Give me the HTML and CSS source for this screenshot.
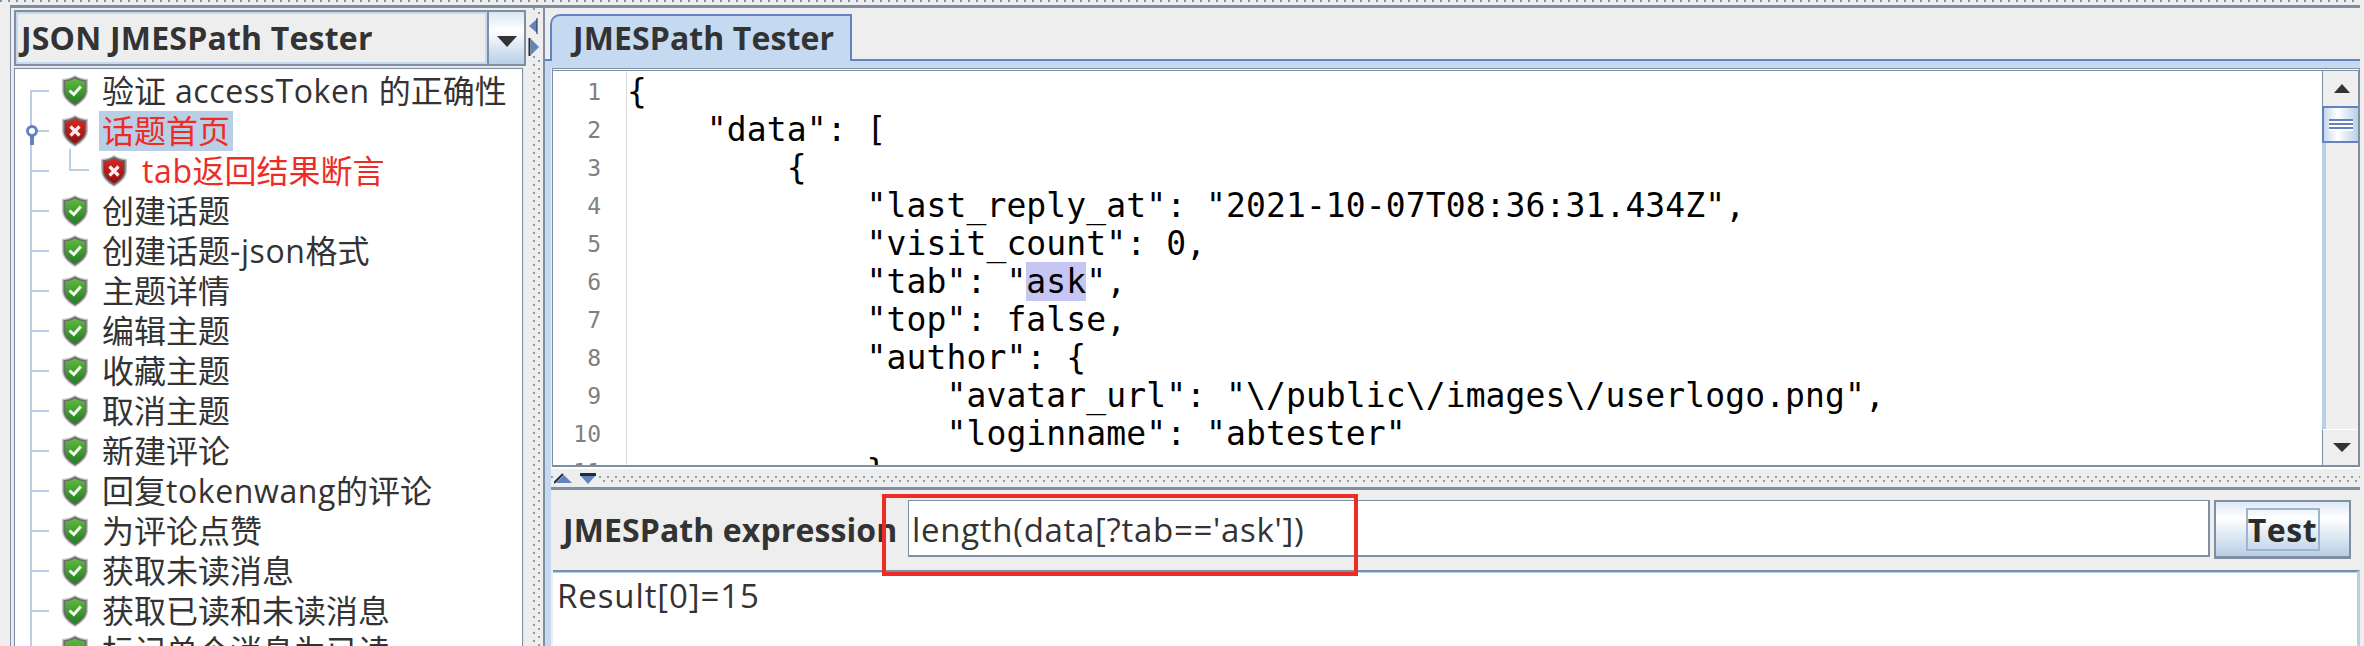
FILE: index.html
```html
<!DOCTYPE html>
<html lang="zh">
<head>
<meta charset="utf-8">
<title>JSON JMESPath Tester</title>
<link rel="stylesheet" href="styles.css">
</head>
<body>
<svg class="defs" width="0" height="0" aria-hidden="true">
  <defs>
    <linearGradient id="g-ok" x1="0" y1="0" x2="0" y2="1"><stop offset="0" stop-color="#63b843"/><stop offset="1" stop-color="#1f7f1c"/></linearGradient>
    <linearGradient id="g-err" x1="0" y1="0" x2="0" y2="1"><stop offset="0" stop-color="#d32a25"/><stop offset="1" stop-color="#8f0f0c"/></linearGradient>
    <symbol id="shield-ok" viewBox="0 0 26 32">
      <path d="M13 0C9.500 2.600 5 3.600 0 4L0 16C0 23 7 28.500 13 32C19 28.500 26 23 26 16L26 4C21 3.600 16.500 2.600 13 0Z" fill="#c4c4c4"/>
      <path d="M13 1.500C10 3.500 6 4.700 1.500 5.200L1.500 16C1.500 22.500 8 27.500 13 30.500C18 27.500 24.500 22.500 24.500 16L24.500 5.200C20 4.700 16 3.500 13 1.500Z" fill="#6a6a6a"/>
      <path d="M13 3.500C10.500 5 7 6.100 3 6.600L3 16C3 21.500 9 26 13 28.500C17 26 23 21.500 23 16L23 6.600C19 6.100 15.500 5 13 3.500Z" fill="url(#g-ok)"/>
      <path d="M7.500 15.500L11.800 19.500L18.800 11.500" fill="none" stroke="#f6fff4" stroke-width="2.800"/>
    </symbol>
    <symbol id="shield-err" viewBox="0 0 26 32">
      <path d="M13 0C9.500 2.600 5 3.600 0 4L0 16C0 23 7 28.500 13 32C19 28.500 26 23 26 16L26 4C21 3.600 16.500 2.600 13 0Z" fill="#c4c4c4"/>
      <path d="M13 1.500C10 3.500 6 4.700 1.500 5.200L1.500 16C1.500 22.500 8 27.500 13 30.500C18 27.500 24.500 22.500 24.500 16L24.500 5.200C20 4.700 16 3.500 13 1.500Z" fill="#6a6a6a"/>
      <path d="M13 3.500C10.500 5 7 6.100 3 6.600L3 16C3 21.500 9 26 13 28.500C17 26 23 21.500 23 16L23 6.600C19 6.100 15.500 5 13 3.500Z" fill="url(#g-err)"/>
      <path d="M8.500 11.500L17.500 20.500M17.500 11.500L8.500 20.500" fill="none" stroke="#ffecec" stroke-width="3.200"/>
    </symbol>
  </defs>
</svg>
<div class="window">
  <div class="top-dots"></div>
  <div class="frame">
    <aside class="left">
      <div class="combo">
        <div class="combo-value">JSON JMESPath Tester</div>
        <div class="combo-button"><span class="tri-down"></span></div>
      </div>
      <ul class="tree">
        <li class="row"><span class="conn first"></span><svg class="shield"><use href="#shield-ok"/></svg><span class="label">验证<span class="latin"> accessToken </span>的正确性</span></li>
        <li class="row"><span class="conn"><svg class="handle" width="14" height="22" viewBox="0 0 14 22"><circle cx="7" cy="7" r="4.500" fill="#fff" stroke="#6382bf" stroke-width="3"/><rect x="5" y="11" width="4" height="10" fill="#6382bf"/></svg></span><svg class="shield"><use href="#shield-err"/></svg><span class="label selected failed">话题首页</span></li>
        <li class="row"><span class="conn"></span><span class="conn-child"></span><svg class="shield"><use href="#shield-err"/></svg><span class="label failed child"><span class="latin">tab</span>返回结果断言</span></li>
        <li class="row"><span class="conn"></span><svg class="shield"><use href="#shield-ok"/></svg><span class="label">创建话题</span></li>
        <li class="row"><span class="conn"></span><svg class="shield"><use href="#shield-ok"/></svg><span class="label">创建话题<span class="latin">-json</span>格式</span></li>
        <li class="row"><span class="conn"></span><svg class="shield"><use href="#shield-ok"/></svg><span class="label">主题详情</span></li>
        <li class="row"><span class="conn"></span><svg class="shield"><use href="#shield-ok"/></svg><span class="label">编辑主题</span></li>
        <li class="row"><span class="conn"></span><svg class="shield"><use href="#shield-ok"/></svg><span class="label">收藏主题</span></li>
        <li class="row"><span class="conn"></span><svg class="shield"><use href="#shield-ok"/></svg><span class="label">取消主题</span></li>
        <li class="row"><span class="conn"></span><svg class="shield"><use href="#shield-ok"/></svg><span class="label">新建评论</span></li>
        <li class="row"><span class="conn"></span><svg class="shield"><use href="#shield-ok"/></svg><span class="label">回复<span class="latin">tokenwang</span>的评论</span></li>
        <li class="row"><span class="conn"></span><svg class="shield"><use href="#shield-ok"/></svg><span class="label">为评论点赞</span></li>
        <li class="row"><span class="conn"></span><svg class="shield"><use href="#shield-ok"/></svg><span class="label">获取未读消息</span></li>
        <li class="row"><span class="conn"></span><svg class="shield"><use href="#shield-ok"/></svg><span class="label">获取已读和未读消息</span></li>
        <li class="row"><span class="conn"></span><svg class="shield"><use href="#shield-ok"/></svg><span class="label">标记单个消息为已读</span></li>
      </ul>
    </aside>
    <div class="vsplit">
      <svg class="vsplit-arrows" width="12" height="42" viewBox="0 0 12 42">
        <path d="M9 5L1 12L9 19Z" fill="#6382bf"/><path d="M9 4L9 20" stroke="#1f2a3a" stroke-width="1"/>
        <path d="M3 25L11 33L3 41Z" fill="#6382bf"/><path d="M1.500 24L1.500 42" stroke="#1f2a3a" stroke-width="2"/>
      </svg>
    </div>
    <main class="right">
      <div class="tabs"><div class="tab">JMESPath Tester</div></div>
      <div class="tab-body">
        <section class="editor">
          <div class="gutter"><div>1</div><div>2</div><div>3</div><div>4</div><div>5</div><div>6</div><div>7</div><div>8</div><div>9</div><div>10</div><div>11</div></div>
<pre class="code">{
    "data": [
        {
            "last_reply_at": "2021-10-07T08:36:31.434Z",
            "visit_count": 0,
            "tab": "<span class="mark">ask</span>",
            "top": false,
            "author": {
                "avatar_url": "\/public\/images\/userlogo.png",
                "loginname": "abtester"
            }</pre>
          <div class="scrollbar">
            <div class="sb-button"><span class="tri-up"></span></div>
            <div class="sb-thumb"><span class="grip"></span></div>
            <div class="sb-track"></div>
            <div class="sb-button down"><span class="tri-down small"></span></div>
          </div>
        </section>
        <div class="hsplit">
          <svg width="44" height="12" viewBox="0 0 44 12"><path d="M2 10L10 2L18 10Z" fill="#6382bf"/><path d="M0 10L9 1" stroke="#1f2a3a" stroke-width="2"/><path d="M26 2L42 2L34 11Z" fill="#6382bf"/><path d="M26 1.500L42 1.500" stroke="#1f2a3a" stroke-width="3"/></svg>
        </div>
        <section class="expr">
          <span class="expr-label">JMESPath expression</span>
          <div class="expr-input">length(data[?tab=='ask'])</div>
          <button class="test" type="button"><span class="test-focus">Test</span></button>
          <div class="annotation"></div>
        </section>
        <section class="result">Result[0]=15</section>
      </div>
    </main>
  </div>
</div>
</body>
</html>
```
FILE: styles.css
```css
* { box-sizing: border-box; }
html, body { margin: 0; padding: 0; height: 646px; overflow: hidden; background: #eeeeee; }
body { font-family: "Open Sans", "Noto Sans CJK SC", sans-serif; font-size: 32px; color: #333; }
.defs { position: absolute; }

.window { height: 646px; display: flex; flex-direction: column; padding-right: 4px; background: #eee; }
.top-dots {
  height: 5px; flex: none;
  background-image: linear-gradient(90deg, #8494a8 2px, transparent 2px);
  background-size: 8px 2px; background-repeat: repeat-x;
}
.frame {
  flex: 1; min-height: 0; margin-left: 10px; display: flex;
  border-top: 3px solid #7f8fa3;
  border-left: 1px solid #7f8fa3;
}

/* left pane */
.left { width: 515px; flex: none; display: flex; flex-direction: column; padding: 2px 0 0 3px; }
.combo { height: 56px; flex: none; display: flex; border: 2px solid #7f8fa3; background: #eee; }
.combo-value {
  flex: 1; border: 2px solid #c5daf0; padding-left: 3px;
  font-weight: 700; line-height: 48px; letter-spacing: .2px; white-space: nowrap; color: #333;
}
.combo-button {
  width: 37px; display: flex; align-items: center; justify-content: center;
  border-left: 2px solid #7f8fa3;
  background: linear-gradient(#d9e5f2, #ffffff 35%, #b8cfe6);
  padding-top: 6px;
}
.tri-down { width: 0; height: 0; border-left: 10px solid transparent; border-right: 10px solid transparent; border-top: 11px solid #333; }
.tri-down.small { border-left-width: 9px; border-right-width: 9px; border-top-width: 9px; }
.tri-up { width: 0; height: 0; border-left: 8px solid transparent; border-right: 8px solid transparent; border-bottom: 9px solid #333; }

.tree {
  list-style: none; margin: 2px 0 0; padding: 2px 0 0; flex: 1; min-height: 0; overflow: hidden;
  width: 509px; background: #fff;
  border: 1px solid #7f8fa3; border-bottom: 0;
  outline: 1px solid #dfe4ea;
}
.row { height: 40px; display: flex; align-items: center; white-space: nowrap; padding-left: 15px; color: #333; }
.conn {
  position: relative; width: 19px; height: 40px; flex: none;
  background:
    linear-gradient(#b8cfe6, #b8cfe6) 0 0 / 2px 100% no-repeat,
    linear-gradient(#b8cfe6, #b8cfe6) 0 19px / 100% 2px no-repeat;
}
.conn.first {
  background:
    linear-gradient(#b8cfe6, #b8cfe6) 0 19px / 2px 21px no-repeat,
    linear-gradient(#b8cfe6, #b8cfe6) 0 19px / 100% 2px no-repeat;
}
.conn-child {
  width: 20px; height: 22px; flex: none; align-self: flex-start; margin: -2px 0 0 20px;
  border-left: 2px solid #b8cfe6; border-bottom: 2px solid #b8cfe6;
}
.conn-child + .shield { margin-left: 12px; }
.handle { position: absolute; left: -5px; top: 13px; }
.shield { width: 26px; height: 32px; flex: none; margin-left: 13px; filter: blur(0.6px); }
.label { margin-left: 11px; padding: 0 3px; line-height: 40px; height: 40px; }
.label.child { margin-left: 12px; }
.label.failed { color: #ee2c25; }
.label.selected { background: #b8cfe6; }
.latin { letter-spacing: .6px; }

/* vertical splitter */
.vsplit {
  width: 17px; flex: none; padding: 6px 0 0 2px;
  background-image: linear-gradient(#8c9bb0 2px, transparent 2px), linear-gradient(#8c9bb0 2px, transparent 2px);
  background-size: 2px 8px, 2px 8px;
  background-position: 7px 0, 12px 4px;
  background-repeat: repeat-y;
}
.vsplit-arrows { display: block; background: #eee; }

/* right pane */
.right { flex: 1; min-width: 0; display: flex; flex-direction: column; border-left: 2px solid #7f8fa3; }
.tabs { height: 53px; flex: none; padding: 6px 0 0 5px; border-bottom: 2px solid #6382bf; display: flex; }
.tab {
  width: 302px; height: 47px; padding-left: 21px;
  border: 2px solid #6382bf; border-bottom: 0; border-top-left-radius: 10px;
  background: #c5daf0; font-weight: 700; line-height: 44px; letter-spacing: .1px; color: #333;
}
.tab-body {
  flex: 1; min-height: 0; display: flex; flex-direction: column;
  border-left: 6px solid #c5daf0; border-top: 7px solid #c5daf0; background: #eee;
}
.editor {
  height: 399px; flex: none; display: flex; background: #fff; margin-left: 1px;
  border-top: 3px double #7f8fa3; border-bottom: 2px solid #7f8fa3; border-left: 1px solid #7f8fa3;
  border-right: 2px solid #7f8fa3;
  overflow: hidden;
}
.gutter {
  width: 74px; flex: none; padding: 2px 25px 0 0; text-align: right;
  border-right: 1px solid #dcdcdc; color: #808080;
  font: 23px/38px "DejaVu Sans Mono", monospace;
  overflow: hidden;
}
.code {
  flex: 1; min-width: 0; margin: 0; padding: 2px 0 0 0; overflow: hidden;
  font: 33px/38px "DejaVu Sans Mono", monospace; letter-spacing: .1px; color: #000;
}
.mark { background: #c6c6f4; }
.scrollbar { width: 36px; flex: none; display: flex; flex-direction: column; }
.sb-button {
  height: 35px; flex: none; display: flex; align-items: center; justify-content: center;
  background: #eee; border-left: 1px solid #7f8fa3; padding-left: 2px;
}
.sb-thumb {
  height: 37px; flex: none; display: flex; align-items: center; justify-content: center;
  border: 2px solid #6382bf; border-right: 0;
  background: linear-gradient(90deg, #c5d8ec, #ffffff 40%, #b8cfe6);
}
.grip {
  width: 24px; height: 12px;
  background: repeating-linear-gradient(#6382bf 0 2px, #ffffff 2px 4px);
}
.sb-track { flex: 1; background: #eee; border-left: 4px solid #b8cfe6; }
.sb-button.down { height: 36px; border-top: 1px solid #fff; }

.hsplit {
  height: 23px; flex: none; padding: 4px 0 0 3px;
  border-bottom: 3px solid #7f8fa3;
  border-top: 2px solid #fff;
  background-image: linear-gradient(90deg, #8c9bb0 2px, transparent 2px), linear-gradient(90deg, #8c9bb0 2px, transparent 2px);
  background-size: 8px 2px, 8px 2px;
  background-position: 0 7px, 4px 11px;
  background-repeat: repeat-x;
}
.hsplit svg { display: block; background: #eee; }

.expr { position: relative; height: 80px; flex: none; display: flex; align-items: flex-start; padding: 10px 9px 0 12px; }
.expr-label { font-weight: 700; line-height: 60px; width: 345px; flex: none; letter-spacing: .1px; white-space: nowrap; color: #333; }
.expr-input {
  width: 1302px; height: 57px; flex: none; padding-left: 3px; background: #fff;
  font-size: 33px; line-height: 57px; letter-spacing: .7px;
  border: 1px solid #7f8fa3; border-right-width: 2px; border-bottom-width: 2px;
  white-space: nowrap; color: #333;
}
.test {
  width: 137px; height: 59px; flex: none; margin-left: 4px; padding: 0; display: flex; align-items: center; justify-content: center;
  border: 2px solid #7f8fa3; border-bottom-width: 3px;
  background: linear-gradient(#dde8f4, #ffffff 30%, #b8cfe6);
  font: 700 32px "Open Sans", sans-serif; letter-spacing: .6px; color: #2c2c2c;
}
.test-focus { width: 74px; height: 43px; border: 2px solid #9db5cd; line-height: 40px; text-align: center; }
.annotation { position: absolute; left: 331px; top: 4px; width: 476px; height: 82px; border: 4px solid #ee2c25; z-index: 2; pointer-events: none; }

.result {
  flex: 1; min-height: 0; margin-left: 2px; padding: 4px 0 0 4px; background: #fff;
  font-size: 33px; line-height: 40px; letter-spacing: .9px;
  border-top: 2px solid #7f8fa3; border-right: 3px solid #b8cfe6; box-shadow: inset 0 1px 0 #b8cfe6; color: #333;
}
```
